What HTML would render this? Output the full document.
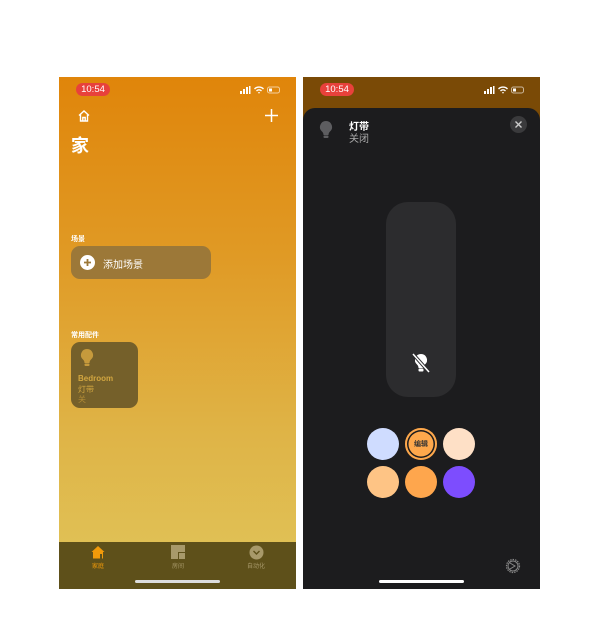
<!DOCTYPE html>
<html><head><meta charset="utf-8"><style>
*{margin:0;padding:0;box-sizing:border-box}
body{width:596px;height:640px;background:#fff;position:relative;font-family:"Liberation Sans","Noto Sans CJK SC",sans-serif;overflow:hidden}
.ph{position:absolute;top:77px;width:237px;height:512px;overflow:hidden}
#L{left:59px;background:linear-gradient(#e0850a 0%,#e09a25 35%,#dfb447 70%,#e0c55a 100%)}
#R{left:303px;background:#7a4a06}
.time{position:absolute;left:17px;top:6px;width:34px;height:13px;border-radius:7px;background:#e8413b;color:#fff;font-size:9.5px;text-align:center;line-height:13px}
.sb{position:absolute;right:14px;top:9px;width:42px;height:8px}
.t{position:absolute;color:#fff;white-space:nowrap}
</style></head><body>
<div class="ph" id="L">
 <div class="time">10:54</div>
 <svg class="sb" viewBox="0 0 42 8"><g fill="#fff"><rect x="0" y="5" width="2" height="3"/><rect x="3" y="3" width="2" height="5"/><rect x="6" y="1" width="2" height="7"/><rect x="9" y="0" width="1.5" height="8"/><path d="M14 2.5a7 7 0 0 1 10 0l-1 1a5.5 5.5 0 0 0-8 0z M16 4.5a4 4 0 0 1 6 0l-1 1a2.5 2.5 0 0 0-4 0z M18 6.5a1.5 1.5 0 0 1 2 0l-1 1.3z"/></g><rect x="27.5" y="1" width="12" height="6" rx="2" fill="none" stroke="#fff" stroke-opacity=".6"/><rect x="29" y="2.5" width="3" height="3" fill="#fff"/></svg>
 <svg style="position:absolute;left:18px;top:32px" width="14" height="14" viewBox="0 0 14 14"><path d="M2 6.5L7 2l5 4.5M3.5 5.5V12h7V5.5M5.8 12V8.5h2.4V12" fill="none" stroke="#fff" stroke-width="1.4"/></svg>
 <svg style="position:absolute;left:206px;top:32px" width="13" height="13"><path d="M6.5 0v13M0 6.5h13" stroke="#fff" stroke-width="1.5"/></svg>
 <div class="t" style="left:12px;top:55px;font-size:18px;font-weight:bold">家</div>
 <div class="t" style="left:12px;top:157px;font-size:7px;font-weight:bold">场景</div>
 <div style="position:absolute;left:12px;top:169px;width:140px;height:33px;border-radius:9px;background:#9c7838"></div>
 <svg style="position:absolute;left:21px;top:178px" width="15" height="15"><circle cx="7.5" cy="7.5" r="7.5" fill="#fff"/><path d="M7.5 4v7M4 7.5h7" stroke="#9c7838" stroke-width="1.8"/></svg>
 <div class="t" style="left:44px;top:179px;font-size:10px">添加场景</div>
 <div class="t" style="left:12px;top:253px;font-size:7px;font-weight:bold">常用配件</div>
 <div style="position:absolute;left:12px;top:265px;width:67px;height:66px;border-radius:9px;background:#75602a"></div>
 <svg style="position:absolute;left:21px;top:271px" width="14" height="20" viewBox="0 0 14 20"><path d="M7 1a6 6 0 0 0-4 10.5c1 1 1.5 2 1.5 3.5h5c0-1.5.5-2.5 1.5-3.5A6 6 0 0 0 7 1z" fill="#c69a3c"/><rect x="4.5" y="15.5" width="5" height="2.5" rx="1" fill="#c69a3c"/></svg>
 <div class="t" style="left:19px;top:297px;font-size:8px;font-weight:bold;color:#d2a640">Bedroom</div>
 <div class="t" style="left:19px;top:307px;font-size:8px;color:#d2a640">灯带</div>
 <div class="t" style="left:19px;top:317px;font-size:8px;color:#b08a36">关</div>
 <div style="position:absolute;left:0;top:465px;width:237px;height:47px;background:#5e501a"></div>
 <svg style="position:absolute;left:32px;top:468px" width="14" height="14" viewBox="0 0 14 14"><path d="M7 1L0.5 7H2v6.5h10V7h1.5z" fill="#f19a0a"/><rect x="9" y="9" width="2" height="4.5" fill="#5e501a"/></svg>
 <div class="t" style="left:33px;top:484px;font-size:6px;color:#f19a0a">家庭</div>
 <svg style="position:absolute;left:112px;top:468px" width="14" height="14"><rect width="14" height="14" fill="#a8996a"/><rect x="7" y="7" width="7" height="7" fill="#5e501a"/><rect x="8" y="8" width="6" height="6" fill="#a8996a"/></svg>
 <div class="t" style="left:113px;top:484px;font-size:6px;color:#a8996a">房间</div>
 <svg style="position:absolute;left:190px;top:468px" width="15" height="15"><circle cx="7.5" cy="7.5" r="7" fill="#a8996a"/><path d="M4.5 6l3 3 3-3" stroke="#5e501a" stroke-width="1.4" fill="none"/></svg>
 <div class="t" style="left:188px;top:484px;font-size:6px;color:#a8996a">自动化</div>
 <div style="position:absolute;left:76px;top:503px;width:85px;height:3px;border-radius:2px;background:#ddd"></div>
</div>
<div class="ph" id="R">
 <div class="time">10:54</div>
 <svg class="sb" viewBox="0 0 42 8"><g fill="#fff"><rect x="0" y="5" width="2" height="3"/><rect x="3" y="3" width="2" height="5"/><rect x="6" y="1" width="2" height="7"/><rect x="9" y="0" width="1.5" height="8"/><path d="M14 2.5a7 7 0 0 1 10 0l-1 1a5.5 5.5 0 0 0-8 0z M16 4.5a4 4 0 0 1 6 0l-1 1a2.5 2.5 0 0 0-4 0z M18 6.5a1.5 1.5 0 0 1 2 0l-1 1.3z"/></g><rect x="27.5" y="1" width="12" height="6" rx="2" fill="none" stroke="#fff" stroke-opacity=".6"/><rect x="29" y="2.5" width="3" height="3" fill="#fff"/></svg>
 <div style="position:absolute;left:0;top:31px;width:237px;height:490px;border-radius:12px 12px 0 0;background:#1c1c1e"></div>
 <svg style="position:absolute;left:16px;top:43px" width="14" height="20" viewBox="0 0 14 20"><path d="M7 1a6 6 0 0 0-4 10.5c1 1 1.5 2 1.5 3.5h5c0-1.5.5-2.5 1.5-3.5A6 6 0 0 0 7 1z" fill="#5d5d60"/><rect x="4.5" y="15.5" width="5" height="2.5" rx="1" fill="#5d5d60"/></svg>
 <div class="t" style="left:46px;top:41px;font-size:10px;font-weight:bold">灯带</div>
 <div class="t" style="left:46px;top:53px;font-size:10px;color:#aaa">关闭</div>
 <svg style="position:absolute;left:207px;top:39px" width="17" height="17"><circle cx="8.5" cy="8.5" r="8.5" fill="#3a3a3c"/><path d="M5.5 5.5l6 6M11.5 5.5l-6 6" stroke="#ccc" stroke-width="1.4"/></svg>
 <div style="position:absolute;left:83px;top:125px;width:70px;height:195px;border-radius:22px;background:#2c2c2e"></div>
 <svg style="position:absolute;left:106px;top:274px" width="24" height="24" viewBox="0 0 24 24"><path d="M12 3a6 6 0 0 0-4 10.5c1 1 1.5 2 1.5 3.5h5c0-1.5.5-2.5 1.5-3.5A6 6 0 0 0 12 3z" fill="#fff"/><rect x="9.5" y="17.5" width="5" height="3" rx="1" fill="#fff"/><path d="M4 3l16 18" stroke="#2c2c2e" stroke-width="3.5"/><path d="M4 3l16 18" stroke="#fff" stroke-width="1.5"/></svg>
 <div style="position:absolute;left:64px;top:351px;width:32px;height:32px;border-radius:50%;background:#cfdcff"></div>
 <div style="position:absolute;left:102px;top:351px;width:32px;height:32px;border-radius:50%;background:#fea84c;box-shadow:inset 0 0 0 2px #fea84c,inset 0 0 0 3.5px #1c1c1e"></div>
 <div class="t" style="left:102px;top:362px;width:32px;text-align:center;font-size:7px;color:#333;font-weight:bold">编辑</div>
 <div style="position:absolute;left:140px;top:351px;width:32px;height:32px;border-radius:50%;background:#fee0c6"></div>
 <div style="position:absolute;left:64px;top:389px;width:32px;height:32px;border-radius:50%;background:#fec485"></div>
 <div style="position:absolute;left:102px;top:389px;width:32px;height:32px;border-radius:50%;background:#fea64d"></div>
 <div style="position:absolute;left:140px;top:389px;width:32px;height:32px;border-radius:50%;background:#7d4dfe"></div>
 <svg style="position:absolute;left:202px;top:481px" width="16" height="16" viewBox="0 0 16 16"><circle cx="8" cy="8" r="6.5" fill="none" stroke="#888" stroke-width="1.2" stroke-dasharray="1.5 1"/><circle cx="8" cy="8" r="5" fill="none" stroke="#888"/><path d="M5 5l5 3-5 3" fill="none" stroke="#888"/></svg>
 <div style="position:absolute;left:76px;top:503px;width:85px;height:3px;border-radius:2px;background:#fff"></div>
</div>
</body></html>
